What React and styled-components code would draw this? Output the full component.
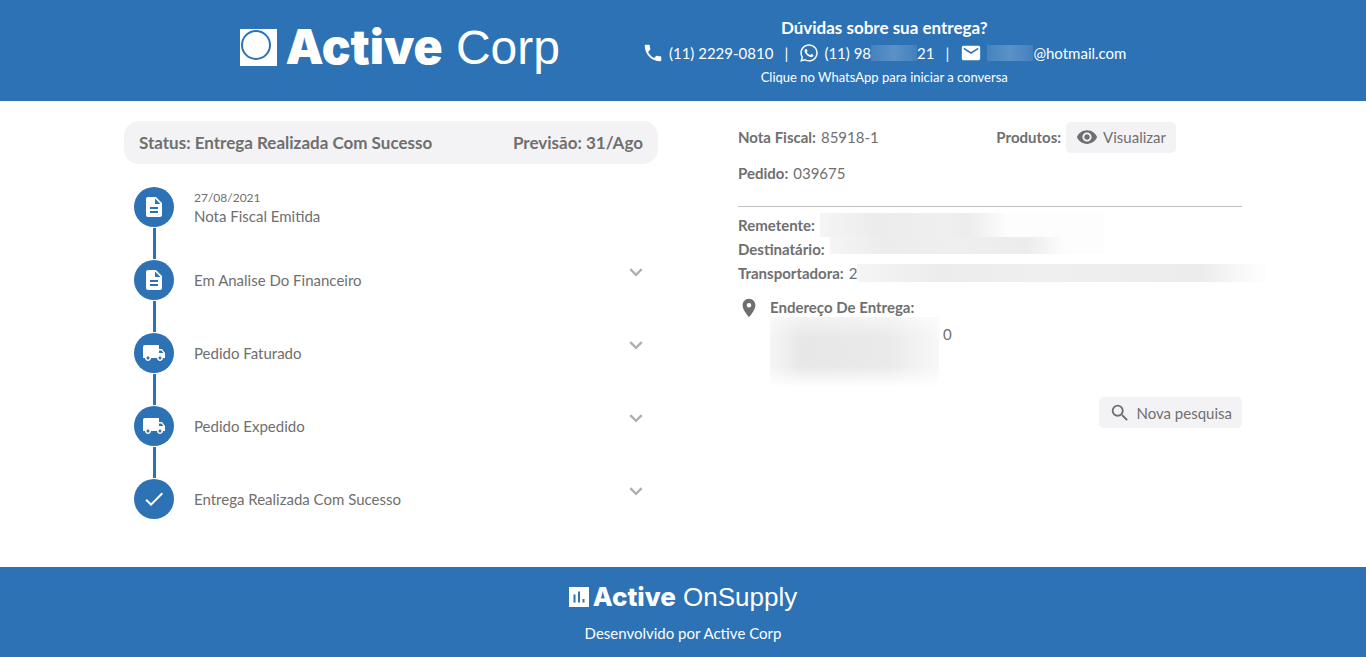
import React from "react";
import styled, { createGlobalStyle } from "styled-components";
import {
  MdPhone,
  MdEmail,
  MdDescription,
  MdLocalShipping,
  MdCheck,
  MdVisibility,
  MdSearch,
  MdPlace,
} from "react-icons/md";
import { FaWhatsapp } from "react-icons/fa";

const blue = "#2c72b5";
const grey = "#6f6f6f";
const pale = "#f3f3f6";

const GlobalStyle = createGlobalStyle`
  *, *::before, *::after { box-sizing: border-box; }
  body {
    margin: 0;
    background: #fff;
    color: ${grey};
    font-family: Lato, "Open Sans", sans-serif;
    font-size: 15px;
    line-height: 20px;
  }
  h1, h2, p, ol { margin: 0; padding: 0; }
  svg { display: block; flex: none; }
`;

const Page = styled.div`
  min-height: 100vh;
  display: flex;
  flex-direction: column;
`;

const Header = styled.header`
  background: ${blue};
  color: #fff;
  display: flex;
  flex-wrap: wrap;
  justify-content: center;
  align-items: flex-start;
  column-gap: 82px;
  padding: 17px 24px 14px;
`;

const Brand = styled.div`
  display: flex;
  align-items: center;
  gap: ${(p) => (p.$small ? 4 : 9)}px;
  font-family: "Liberation Sans", sans-serif;
  font-size: ${(p) => (p.$small ? 26 : 48)}px;
  line-height: ${(p) => (p.$small ? 32 : 60)}px;
  white-space: nowrap;

  b {
    font-family: Inter, sans-serif;
    font-weight: ${(p) => (p.$small ? 800 : 900)};
  }
`;

const Contact = styled.div`
  display: flex;
  flex-direction: column;
  align-items: center;
`;

const ContactTitle = styled.h2`
  font-size: 17px;
  line-height: 22px;
  font-weight: 700;
`;

const ContactRow = styled.div`
  display: flex;
  align-items: center;
  height: 28px;
`;

const ContactLink = styled.a`
  display: flex;
  align-items: center;
  color: inherit;
  text-decoration: none;

  svg { margin-right: 5px; }
`;

const Divider = styled.span`
  width: 26px;
  text-align: center;
`;

const ContactMask = styled.span`
  width: 46px;
  height: 16px;
  background: linear-gradient(90deg, #4583be, #5a92c6 50%, #4381bd);
`;

const Hint = styled.p`
  font-size: 13px;
  line-height: 20px;
`;

const Main = styled.main`
  flex: 1;
  width: 100%;
  max-width: 1166px;
  margin: 0 auto;
  padding: 20px 24px 40px;
  display: grid;
  grid-template-columns: 534fr 504fr;
  column-gap: 80px;
  align-items: start;
`;

const StatusBar = styled.h1`
  display: flex;
  justify-content: space-between;
  padding: 11px 15px;
  border-radius: 15px;
  background: ${pale};
  font-size: 17px;
  line-height: 21px;
  font-weight: 700;
`;

const Timeline = styled.ol`
  list-style: none;
  padding: 23px 10px 0;
`;

const Step = styled.li`
  display: grid;
  grid-template-columns: 40px 1fr auto;
  column-gap: 20px;
`;

const Rail = styled.div`
  display: flex;
  flex-direction: column;
  align-items: center;
`;

const Dot = styled.span`
  width: 40px;
  height: 40px;
  border-radius: 50%;
  background: ${blue};
  color: #fff;
  display: flex;
  align-items: center;
  justify-content: center;
`;

const Connector = styled.span`
  width: 3px;
  height: 31px;
  margin: 1px 0;
  background: ${blue};
`;

const StepText = styled.div`
  height: 40px;
  display: flex;
  flex-direction: column;
  justify-content: center;
  line-height: 18px;
`;

const StepDate = styled.time`
  font-size: 12px;
`;

const Expand = styled.button`
  align-self: start;
  border: 0;
  padding: 0;
  background: none;
  color: #b0b0b0;
  cursor: pointer;
`;

const Summary = styled.div`
  display: flex;
  justify-content: space-between;
  padding: 0 66px 17px 0;
  border-bottom: 1px solid #c0c0c0;
`;

const Field = styled.p`
  display: flex;
  align-items: center;
  height: ${(p) => (p.$tall ? 32 : 24)}px;

  b { margin-right: 5px; }
`;

const Stack = styled.div`
  display: grid;
  align-content: start;
  row-gap: 4px;
`;

const SoftButton = styled.button`
  display: flex;
  align-items: center;
  gap: 5px;
  height: 31px;
  padding: 0 10px;
  border: 0;
  border-radius: 5px;
  background: ${pale};
  color: ${grey};
  font: inherit;
  cursor: pointer;
`;

const Parties = styled.div`
  padding-top: 6px;
`;

const Mask = styled.span`
  flex: 1;
  align-self: ${(p) => p.$align || "flex-start"};
  height: ${(p) => p.$height}px;
  margin-right: ${(p) => p.$end}px;
  background: linear-gradient(
    90deg,
    #f5f5f5,
    #ececec 20%,
    #efefef 45%,
    #ececec ${(p) => p.$fade - 14}%,
    #fdfdfd ${(p) => p.$fade}%
  );
`;

const Address = styled.section`
  display: flex;
  gap: 10px;
  padding-top: 12px;
`;

const AddressTitle = styled.h2`
  font-size: 15px;
  line-height: 20px;
  font-weight: 700;
`;

const AddressBody = styled.div`
  display: flex;
  gap: 4px;
  line-height: 34px;
`;

const AddressMask = styled.span`
  width: 169px;
  height: 70px;
  background:
    linear-gradient(180deg, #ffffff80, #ffffff00 30%, #ffffff00 70%, #fff),
    linear-gradient(90deg, #f5f5f5, #e7e7e7 20%, #eaeaea 70%, #f8f8f8);
`;

const Actions = styled.div`
  display: flex;
  justify-content: flex-end;
  padding-top: 10px;
`;

const Footer = styled.footer`
  background: ${blue};
  color: #fff;
  display: flex;
  flex-direction: column;
  align-items: center;
  padding: 14px 24px 14px;
  gap: 10px;
`;

const steps = [
  { name: "Nota Fiscal Emitida", date: "27/08/2021", icon: MdDescription },
  { name: "Em Analise Do Financeiro", icon: MdDescription },
  { name: "Pedido Faturado", icon: MdLocalShipping },
  { name: "Pedido Expedido", icon: MdLocalShipping },
  { name: "Entrega Realizada Com Sucesso", icon: MdCheck },
];

function CorpMark() {
  return (
    <svg width="37" height="37" viewBox="0 0 37 37" aria-hidden="true">
      <rect width="37" height="37" fill="#fff" />
      <circle cx="16" cy="16" r="14" fill="none" stroke={blue} strokeWidth="2" />
    </svg>
  );
}

function SupplyMark() {
  return (
    <svg width="20" height="20" viewBox="0 0 20 20" aria-hidden="true">
      <rect width="20" height="20" fill="#fff" />
      <path d="M5.5 7.5v8M10 4.5v11M14.5 12v3.5" stroke={blue} strokeWidth="2" />
    </svg>
  );
}

function Chevron() {
  return (
    <svg width="24" height="24" viewBox="0 0 24 24" aria-hidden="true">
      <path d="M6.3 9.2l5.7 5.6 5.7-5.6" fill="none" stroke="currentColor" strokeWidth="2.4" />
    </svg>
  );
}

export default function App() {
  return (
    <Page>
      <GlobalStyle />
      <Header>
        <Brand>
          <CorpMark />
          <span><b>Active</b> Corp</span>
        </Brand>
        <Contact>
          <ContactTitle>Dúvidas sobre sua entrega?</ContactTitle>
          <ContactRow>
            <ContactLink href="tel:+551122290810">
              <MdPhone size={22} />(11) 2229-0810
            </ContactLink>
            <Divider>|</Divider>
            <ContactLink href="#whatsapp">
              <FaWhatsapp size={20} />(11) 98<ContactMask />21
            </ContactLink>
            <Divider>|</Divider>
            <ContactLink href="#email">
              <MdEmail size={22} /><ContactMask />@hotmail.com
            </ContactLink>
          </ContactRow>
          <Hint>Clique no WhatsApp para iniciar a conversa</Hint>
        </Contact>
      </Header>

      <Main>
        <section>
          <StatusBar>
            <span>Status: Entrega Realizada Com Sucesso</span>
            <span>Previsão: 31/Ago</span>
          </StatusBar>
          <Timeline>
            {steps.map(({ name, date, icon: Icon }, i) => (
              <Step key={name}>
                <Rail>
                  <Dot><Icon size={24} /></Dot>
                  {i < steps.length - 1 && <Connector />}
                </Rail>
                <StepText>
                  {date && <StepDate>{date}</StepDate>}
                  <span>{name}</span>
                </StepText>
                {!date && (
                  <Expand type="button" aria-label={`Expandir ${name}`}>
                    <Chevron />
                  </Expand>
                )}
              </Step>
            ))}
          </Timeline>
        </section>

        <section>
          <Summary>
            <Stack>
              <Field $tall><b>Nota Fiscal:</b>85918-1</Field>
              <Field $tall><b>Pedido:</b>039675</Field>
            </Stack>
            <Stack>
              <Field as="div" $tall>
                <b>Produtos:</b>
                <SoftButton type="button">
                  <MdVisibility size={22} />Visualizar
                </SoftButton>
              </Field>
            </Stack>
          </Summary>
          <Parties>
            <Field><b>Remetente:</b><Mask $height={24} $end={138} $fade={66} /></Field>
            <Field><b>Destinatário:</b><Mask $height={17} $end={138} $fade={86} /></Field>
            <Field>
              <b>Transportadora:</b>2<Mask $height={18} $end={-24} $fade={98} $align="center" />
            </Field>
          </Parties>
          <Address>
            <MdPlace size={22} />
            <div>
              <AddressTitle>Endereço De Entrega:</AddressTitle>
              <AddressBody><AddressMask />0</AddressBody>
            </div>
          </Address>
          <Actions>
            <SoftButton type="button">
              <MdSearch size={22} />Nova pesquisa
            </SoftButton>
          </Actions>
        </section>
      </Main>

      <Footer>
        <Brand $small>
          <SupplyMark />
          <span><b>Active</b> OnSupply</span>
        </Brand>
        <p>Desenvolvido por Active Corp</p>
      </Footer>
    </Page>
  );
}
